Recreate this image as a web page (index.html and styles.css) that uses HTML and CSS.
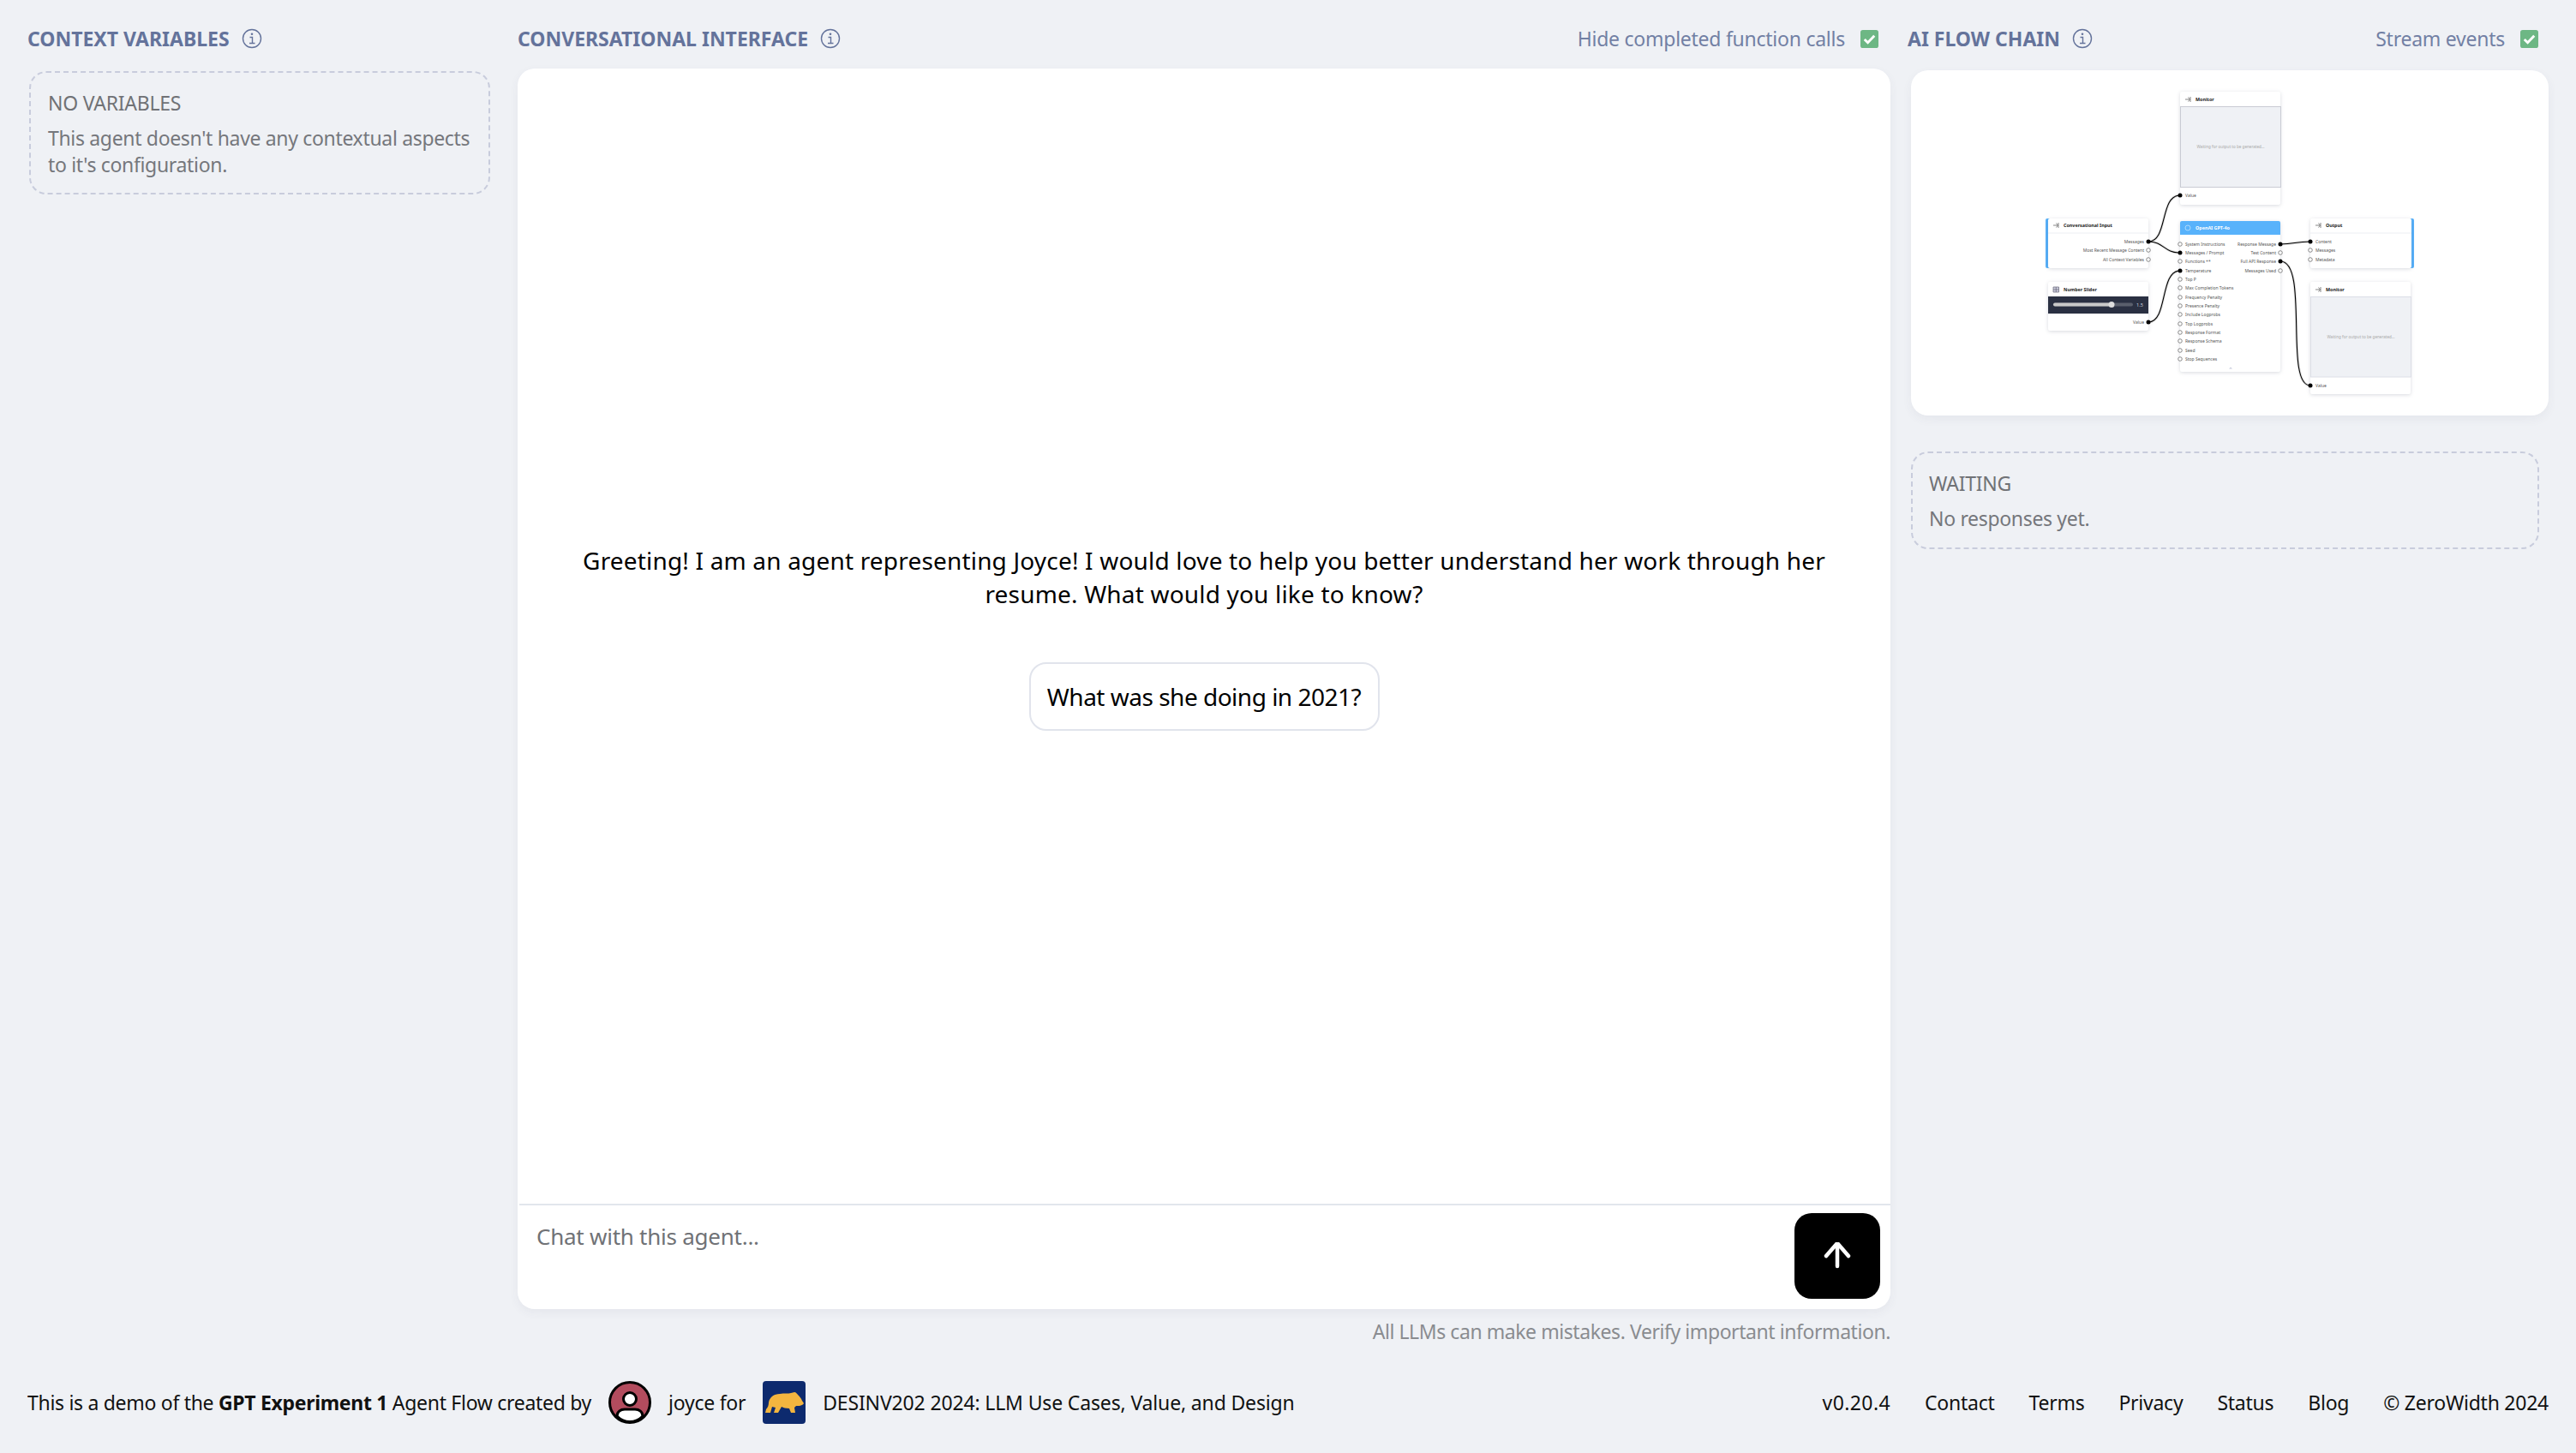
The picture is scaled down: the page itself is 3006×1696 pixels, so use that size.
FILE: index.html
```html
<!DOCTYPE html>
<html lang="en">
  <head>
    <meta charset="UTF-8">
    <title>GPT Experiment 1 - ZeroWidth</title>
    <link rel="stylesheet" href="styles.css">
  </head>
  <body>
    <main class="layout">
      <!-- Context variables -->
      <section class="col">
        <div class="col-head">
          <h2>Context Variables</h2>
          <svg class="info" viewBox="0 0 24 24"><circle cx="12" cy="12" r="10.5"/><path d="M9.500 10.500h3v7M9 17.500h6.500"/><circle class="dot" cx="12" cy="6.800" r="1.300"/></svg>
        </div>
        <div class="empty empty-left">
          <h3>NO VARIABLES</h3>
          <p>This agent doesn't have any contextual aspects to it's configuration.</p>
        </div>
      </section>

      <!-- Chat -->
      <section class="col">
        <div class="col-head">
          <h2>Conversational Interface</h2>
          <svg class="info" viewBox="0 0 24 24"><circle cx="12" cy="12" r="10.5"/><path d="M9.500 10.500h3v7M9 17.500h6.500"/><circle class="dot" cx="12" cy="6.800" r="1.300"/></svg>
          <label class="toggle toggle-chat">Hide completed function calls
            <svg class="check" viewBox="0 0 22 22"><rect width="22" height="22" rx="3"/><path d="M5 11.500l4 4 8-8.500"/></svg>
          </label>
        </div>
        <div class="chat">
          <div class="messages">
            <p class="greeting">Greeting! I am an agent representing Joyce! I would love to help you better understand her work through her resume. What would you like to know?</p>
            <button class="chip">What was she doing in 2021?</button>
          </div>
          <div class="composer">
            <div class="placeholder">Chat with this agent...</div>
            <button class="send">
              <svg viewBox="0 2 32 32"><path d="M16 30V4M3 18L16 3l13 15"/></svg>
            </button>
          </div>
        </div>
        <p class="disclaimer">All LLMs can make mistakes. Verify important information.</p>
      </section>

      <!-- Flow chain -->
      <section class="col col-flow">
        <div class="col-head col-head-flow">
          <h2>AI Flow Chain</h2>
          <svg class="info" viewBox="0 0 24 24"><circle cx="12" cy="12" r="10.5"/><path d="M9.500 10.500h3v7M9 17.500h6.500"/><circle class="dot" cx="12" cy="6.800" r="1.300"/></svg>
          <label class="toggle">Stream events
            <svg class="check" viewBox="0 0 22 22"><rect width="22" height="22" rx="3"/><path d="M5 11.500l4 4 8-8.500"/></svg>
          </label>
        </div>
        <div class="flow-card">
          <!-- viewBox uses page coordinates of the diagram -->
          <svg class="flow" viewBox="2230 82 744 403">
            <!-- Monitor top -->
            <rect class="node" x="2544" y="107" width="117" height="132" rx="2"/>
            <rect class="well" x="2544.500" y="124.500" width="117" height="94"/>
            <path class="pin" d="M2550 116h5M2553.500 113.500l2 2.500-2 2.500M2556 113v6"/>
            <text class="title" x="2562" y="117.800">Monitor</text>
            <text class="wait" x="2603" y="172.500">Waiting for output to be generated...</text>
            <text class="lbl" x="2550" y="229.700">Value</text>

            <!-- Conversational input -->
            <rect class="bar" x="2387" y="255" width="8" height="58" rx="2"/>
            <rect class="node" x="2390" y="255" width="117" height="58" rx="2"/>
            <path class="rule" d="M2390 272h117"/>
            <path class="pin" d="M2396 263h5M2399.500 260.500l2 2.500-2 2.500M2402 260v6"/>
            <text class="title" x="2408" y="264.800">Conversational Input</text>
            <text class="lbl end" x="2502" y="283.700">Messages</text>
            <text class="lbl end" x="2502" y="293.700">Most Recent Message Content</text>
            <text class="lbl end" x="2502" y="304.700">All Context Variables</text>

            <!-- Number slider -->
            <rect class="node" x="2390" y="329" width="117" height="57" rx="2"/>
            <rect class="band" x="2390" y="346" width="117" height="20"/>
            <path class="grid-ico" d="M2396 335h6.500v6h-6.500zM2399.250 335v6M2396 338h6.500"/>
            <text class="title" x="2408" y="339.500">Number Slider</text>
            <rect class="track" x="2396" y="353.500" width="93" height="4" rx="2"/>
            <rect class="track-on" x="2396" y="353.500" width="68" height="4" rx="2"/>
            <circle class="knob" cx="2464" cy="355.500" r="3.500"/>
            <text class="num" x="2493" y="357.500">1.5</text>
            <text class="lbl end" x="2502" y="377.700">Value</text>

            <!-- OpenAI node -->
            <rect class="node" x="2544" y="258" width="117" height="176" rx="2"/>
            <path class="head" d="M2544 274v-14a2 2 0 0 1 2-2h113a2 2 0 0 1 2 2v14z"/>
            <circle class="head-ico" cx="2553" cy="266" r="3"/>
            <text class="title title-on" x="2562" y="267.800">OpenAI GPT-4o</text>
            <text class="lbl" x="2550" y="286.700">System Instructions</text>
            <text class="lbl" x="2550" y="296.700">Messages / Prompt</text>
            <text class="lbl" x="2550" y="306.700">Functions +*</text>
            <text class="lbl" x="2550" y="317.700">Temperature</text>
            <text class="lbl" x="2550" y="327.700">Top P</text>
            <text class="lbl" x="2550" y="337.700">Max Completion Tokens</text>
            <text class="lbl" x="2550" y="348.700">Frequency Penalty</text>
            <text class="lbl" x="2550" y="358.700">Presence Penalty</text>
            <text class="lbl" x="2550" y="368.700">Include Logprobs</text>
            <text class="lbl" x="2550" y="379.700">Top Logprobs</text>
            <text class="lbl" x="2550" y="389.700">Response Format</text>
            <text class="lbl" x="2550" y="399.700">Response Schema</text>
            <text class="lbl" x="2550" y="410.700">Seed</text>
            <text class="lbl" x="2550" y="420.700">Stop Sequences</text>
            <text class="lbl end" x="2656" y="286.700">Response Message</text>
            <text class="lbl end" x="2656" y="296.700">Test Content</text>
            <text class="lbl end" x="2656" y="306.700">Full API Response</text>
            <text class="lbl end" x="2656" y="317.700">Messages Used</text>
            <path class="grip" d="M2601 430.500l2-2 2 2z"/>

            <!-- Output -->
            <rect class="bar" x="2809" y="255" width="8" height="58" rx="2"/>
            <rect class="node" x="2696" y="255" width="118" height="58" rx="2"/>
            <path class="rule" d="M2696 272h118"/>
            <path class="pin" d="M2702 263h5M2705.500 260.500l2 2.500-2 2.500M2708 260v6"/>
            <text class="title" x="2714" y="264.800">Output</text>
            <text class="lbl" x="2702" y="283.700">Content</text>
            <text class="lbl" x="2702" y="293.700">Messages</text>
            <text class="lbl" x="2702" y="304.700">Metadata</text>

            <!-- Monitor bottom -->
            <rect class="node" x="2696" y="329" width="117" height="131" rx="2"/>
            <rect class="well well-soft" x="2696.500" y="346.500" width="117" height="93.500"/>
            <path class="pin" d="M2702 338h5M2705.500 335.500l2 2.500-2 2.500M2708 335v6"/>
            <text class="title" x="2714" y="339.800">Monitor</text>
            <text class="wait" x="2755" y="394.500">Waiting for output to be generated...</text>
            <text class="lbl" x="2702" y="451.700">Value</text>

            <!-- Wires -->
            <path class="wire-glow" d="M2507 282C2530 282 2520 228 2544 228M2507 282C2525 282 2525 295 2544 295M2507 376C2530 376 2520 316 2544 316M2661 285C2678 285 2678 282 2696 282M2661 305C2695 305 2665 450 2696 450"/>
            <path class="wire" d="M2507 282C2530 282 2520 228 2544 228M2507 282C2525 282 2525 295 2544 295M2507 376C2530 376 2520 316 2544 316M2661 285C2678 285 2678 282 2696 282M2661 305C2695 305 2665 450 2696 450"/>

            <!-- Ports -->
            <g class="port-on">
              <circle cx="2544" cy="228" r="2.500"/><circle cx="2507" cy="282" r="2.500"/>
              <circle cx="2507" cy="376" r="2.500"/><circle cx="2544" cy="295" r="2.500"/>
              <circle cx="2544" cy="316" r="2.500"/><circle cx="2661" cy="285" r="2.500"/>
              <circle cx="2661" cy="305" r="2.500"/><circle cx="2696" cy="282" r="2.500"/>
              <circle cx="2696" cy="450" r="2.500"/>
            </g>
            <g class="port-off">
              <circle cx="2507" cy="292" r="2.300"/><circle cx="2507" cy="303" r="2.300"/>
              <circle cx="2544" cy="285" r="2.300"/><circle cx="2544" cy="305" r="2.300"/>
              <circle cx="2544" cy="326" r="2.300"/><circle cx="2544" cy="336" r="2.300"/>
              <circle cx="2544" cy="347" r="2.300"/><circle cx="2544" cy="357" r="2.300"/>
              <circle cx="2544" cy="367" r="2.300"/><circle cx="2544" cy="378" r="2.300"/>
              <circle cx="2544" cy="388" r="2.300"/><circle cx="2544" cy="398" r="2.300"/>
              <circle cx="2544" cy="409" r="2.300"/><circle cx="2544" cy="419" r="2.300"/>
              <circle cx="2661" cy="295" r="2.300"/><circle cx="2661" cy="316" r="2.300"/>
              <circle cx="2696" cy="292" r="2.300"/><circle cx="2696" cy="303" r="2.300"/>
            </g>
          </svg>
        </div>
        <div class="empty empty-right">
          <h3>WAITING</h3>
          <p>No responses yet.</p>
        </div>
      </section>
    </main>

    <footer>
      <div class="credit">
        <span class="credit-lead">This is a demo of the <b>GPT Experiment 1</b> Agent Flow created by</span>
        <svg class="avatar" viewBox="0 0 50 50">
          <circle class="av-bg" cx="25" cy="25" r="23.500"/>
          <path class="av-body" d="M10 41c0-5 4-8 9-8h12c5 0 9 3 9 8-4 4-9 6.500-15 6.500S14 45 10 41z"/>
          <circle class="av-head" cx="25" cy="21" r="7.500"/>
        </svg>
        <span>joyce for</span>
        <svg class="crest" viewBox="0 0 50 50">
          <rect width="50" height="50" rx="4"/>
          <path d="M3 37l1-4c2-2 3-5 3-8 1-6 6-10 13-10 5-1 10 0 13-1l4-1c2 0 3 2 4 3 2 2 4 4 5 7l2 3c-1 2-3 2-5 3h-4l-2 2 1 6h-5l-2-5c-4 0-7-1-9-2l-4 7h-5l2-6-4-1-2 7z"/>
        </svg>
        <span class="course">DESINV202 2024: LLM Use Cases, Value, and Design</span>
      </div>
      <nav class="links">
        <span class="version">v0.20.4</span>
        <a>Contact</a>
        <a>Terms</a>
        <a>Privacy</a>
        <a>Status</a>
        <a>Blog</a>
        <span>© ZeroWidth 2024</span>
      </nav>
    </footer>
  </body>
</html>
```

FILE: styles.css
```css
/* General Styles */
* {
  box-sizing: border-box;
}

body {
  margin: 0;
  height: 1696px;
  display: flex;
  flex-direction: column;
  background: #eff1f5;
  color: #000;
  font-family: "Noto Sans", "Open Sans", sans-serif;
  font-size: 23px;
  letter-spacing: -0.25px;
  overflow: hidden;
}

.layout {
  flex: 1;
  min-height: 0;
  display: grid;
  grid-template-columns: 540px 1602px 744px;
  column-gap: 32px;
  padding: 17px 32px 0;
}

.col-flow {
  margin-left: -8px;
  width: 744px;
}

.col-head {
  height: 56px;
  display: flex;
  align-items: center;
  gap: 14px;
}

.col-head-flow {
  margin-left: -4px;
}

.col-head h2 {
  margin: 0;
  font-size: 23px;
  font-weight: 700;
  letter-spacing: 0;
  text-transform: uppercase;
  color: #64739b;
}

.info {
  width: 24px;
  height: 24px;
  fill: none;
  stroke: #64739b;
  stroke-width: 1.4;
}

.info .dot {
  fill: #64739b;
  stroke: none;
}

.toggle {
  margin-left: auto;
  display: flex;
  align-items: center;
  gap: 18px;
  padding-right: 12px;
  color: #7280a4;
}

.toggle-chat {
  padding-right: 14px;
}

.check {
  width: 21px;
  height: 21px;
}

.check rect {
  fill: #6db784;
}

.check path {
  fill: none;
  stroke: #fff;
  stroke-width: 3;
}

/* Empty state boxes */
.empty {
  border: 2px dashed #c8ccdc;
  border-radius: 20px;
  color: #707276;
}

.empty h3 {
  margin: 0;
  font-size: 23px;
  font-weight: 400;
  line-height: 40px;
}

.empty p {
  margin: 6px 0 0;
  line-height: 31px;
  letter-spacing: -0.33px;
  color: #75777c;
}

.empty-left {
  margin: 10px 0 0 2px;
  height: 144px;
  padding: 15px 8px 15px 20px;
}

.empty-right {
  width: 733px;
  height: 114px;
  margin-top: 42px;
  padding: 15px 19px;
}

/* Chat */
.chat {
  margin-top: 7px;
  height: 1448px;
  display: flex;
  flex-direction: column;
  background: #fff;
  border-radius: 20px;
  box-shadow: 0 4px 12px rgba(60, 70, 100, 0.06);
}

.messages {
  flex: 1;
  display: flex;
  flex-direction: column;
  align-items: center;
  justify-content: center;
  gap: 60px;
  padding-top: 2px;
}

.greeting {
  margin: 0;
  width: 1500px;
  text-align: center;
  font-size: 28px;
  letter-spacing: 0.18px;
  line-height: 39px;
}

.chip {
  height: 80px;
  width: 409px;
  padding: 0;
  background: #fff;
  border: 2px solid #e1e4ec;
  border-radius: 20px;
  font: inherit;
  font-size: 28px;
  letter-spacing: -0.5px;
  color: #000;
}

.composer {
  height: 123px;
  margin-left: 2px;
  display: flex;
  justify-content: space-between;
  padding: 9px 12px 0 20px;
  border-top: 2px solid #e2e6ec;
}

.placeholder {
  padding-top: 9px;
  font-size: 26px;
  line-height: 36px;
  color: #707276;
}

.send {
  width: 100px;
  height: 100px;
  padding: 0;
  border: 0;
  border-radius: 20px;
  background: #000;
  display: flex;
  align-items: center;
  justify-content: center;
}

.send svg {
  width: 32px;
  height: 32px;
  fill: none;
  stroke: #fff;
  stroke-width: 4.5;
  stroke-linecap: round;
}

.disclaimer {
  margin: 10px 0 0;
  text-align: right;
  letter-spacing: -0.43px;
  color: #8a8c90;
}

/* Flow card */
.flow-card {
  margin-top: 9px;
  height: 403px;
  background: #fff;
  border-radius: 20px;
  box-shadow: 0 4px 12px rgba(60, 70, 100, 0.06);
  overflow: hidden;
}

.flow {
  display: block;
  width: 744px;
  height: 403px;
  font-family: "Noto Sans", sans-serif;
  letter-spacing: 0;
}

.node {
  fill: #fff;
  filter: drop-shadow(0 1px 2px rgba(40, 50, 80, 0.18));
}

.well {
  fill: #eff1f5;
  stroke: #c9cbd4;
  stroke-width: 1;
}

.well-soft {
  stroke: #dcdee6;
}

.bar {
  fill: #58b2fb;
}

.head {
  fill: #58b2fb;
}

.head-ico {
  fill: none;
  stroke: #bfe2fd;
  stroke-width: 0.8;
}

.band {
  fill: #2a3042;
}

.rule {
  stroke: #eceef2;
  stroke-width: 1;
}

.pin {
  fill: none;
  stroke: #555;
  stroke-width: 0.7;
}

.grid-ico {
  fill: #ccd;
  stroke: #667;
  stroke-width: 0.7;
}

.title {
  font-size: 5.4px;
  font-weight: 700;
  fill: #222;
}

.title-on {
  fill: #fff;
}

.lbl {
  font-size: 5px;
  fill: #555;
}

.end {
  text-anchor: end;
}

.wait {
  font-size: 4.6px;
  fill: #aaa;
  text-anchor: middle;
}

.num {
  font-size: 5.6px;
  fill: #ccd;
}

.track {
  fill: #5a5f6c;
}

.track-on {
  fill: #c9c9c9;
}

.knob {
  fill: #ddd;
}

.grip {
  fill: #c9cddd;
}

.wire {
  fill: none;
  stroke: #000;
  stroke-width: 1.1;
}

.wire-glow {
  fill: none;
  stroke: rgba(0, 0, 0, 0.12);
  stroke-width: 3;
}

.port-on {
  fill: #000;
}

.port-off {
  fill: #fff;
  stroke: #444;
  stroke-width: 0.6;
}

/* Footer */
footer {
  height: 118px;
  padding: 0 32px;
  display: flex;
  align-items: center;
  justify-content: space-between;
  color: #111;
}

.credit,
.links {
  display: flex;
  align-items: center;
}

.credit {
  gap: 20px;
}

.credit-lead {
  letter-spacing: -0.3px;
}

.course {
  letter-spacing: -0.15px;
}

.links {
  gap: 40px;
  letter-spacing: -0.25px;
}

.version {
  letter-spacing: 0.4px;
}

.avatar {
  width: 50px;
  height: 50px;
}

.av-bg {
  fill: #b34c5e;
  stroke: #000;
  stroke-width: 3;
}

.av-body {
  fill: #fff;
  stroke: #000;
  stroke-width: 3;
}

.av-head {
  fill: #fff;
  stroke: #000;
  stroke-width: 3;
}

.crest {
  width: 50px;
  height: 50px;
}

.crest rect {
  fill: #0d2a6e;
}

.crest path {
  fill: #f3b53f;
}
```
